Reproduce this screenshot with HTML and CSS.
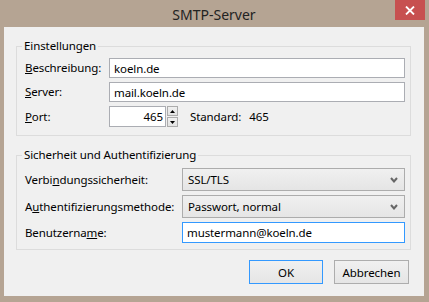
FILE: index.html
```html
<!DOCTYPE html>
<html lang="de">
<head>
    <meta charset="UTF-8">
    <title>SMTP-Server</title>
    <link rel="stylesheet" href="styles.css">
</head>
<body>
    <div class="window">
        <div class="titlebar">
            <span class="title">SMTP-Server</span>
            <button class="close" aria-label="Schließen">
                <svg width="10" height="9" viewBox="0 0 10 9"><path d="M1 0.5 L9 8.5 M9 0.5 L1 8.5" stroke="#fff" stroke-width="1.8"/></svg>
            </button>
        </div>
        <div class="client">
            <fieldset class="group">
                <legend>Einstellungen</legend>
                <div class="row">
                    <label class="lbl lbl-short"><u>B</u>eschreibung:</label>
                    <input class="field" value="koeln.de">
                </div>
                <div class="row">
                    <label class="lbl lbl-short"><u>S</u>erver:</label>
                    <input class="field" value="mail.koeln.de">
                </div>
                <div class="row port-row">
                    <label class="lbl lbl-short"><u>P</u>ort:</label>
                    <input class="field num" value="465">
                    <div class="spin">
                        <span class="spin-btn"><svg width="5" height="3" viewBox="0 0 5 3"><path d="M0 3 L2.5 0 L5 3 Z" fill="#000"/></svg></span>
                        <span class="spin-btn"><svg width="5" height="3" viewBox="0 0 5 3"><path d="M0 0 L2.5 3 L5 0 Z" fill="#000"/></svg></span>
                    </div>
                    <span class="std">Standard:</span>
                    <span class="std-val">465</span>
                </div>
            </fieldset>

            <fieldset class="group group-sec">
                <legend>Sicherheit und Authentifizierung</legend>
                <div class="row">
                    <label class="lbl lbl-long">Verbi<u>n</u>dungssicherheit:</label>
                    <div class="select">
                        <span>SSL/TLS</span>
                        <svg width="8" height="6" viewBox="0 0 8 6"><path d="M1 1 L4 4.5 L7 1" stroke="#666" stroke-width="2" fill="none"/></svg>
                    </div>
                </div>
                <div class="row">
                    <label class="lbl lbl-long">A<u>u</u>thentifizierungsmethode:</label>
                    <div class="select">
                        <span>Passwort, normal</span>
                        <svg width="8" height="6" viewBox="0 0 8 6"><path d="M1 1 L4 4.5 L7 1" stroke="#666" stroke-width="2" fill="none"/></svg>
                    </div>
                </div>
                <div class="row">
                    <label class="lbl lbl-long">Benutzerna<u>m</u>e:</label>
                    <input class="field focus" value="mustermann@koeln.de">
                </div>
            </fieldset>

            <div class="buttons">
                <button class="btn btn-default">OK</button>
                <button class="btn">Abbrechen</button>
            </div>
        </div>
    </div>
</body>
</html>
```

FILE: styles.css
```css
* {
    box-sizing: border-box;
}
body {
    margin: 0;
    font-family: 'Noto Sans', 'Open Sans', sans-serif;
    font-size: 11.5px;
    letter-spacing: -0.1px;
    color: #000;
    background: #b5a493;
}
.window {
    width: 429px;
    height: 302px;
    background: #b5a493;
    padding: 0 5px 6px 4px;
    display: flex;
    flex-direction: column;
}
.titlebar {
    position: relative;
    height: 27px;
    display: flex;
    justify-content: center;
    align-items: center;
}
.title {
    font-size: 14px;
    letter-spacing: 0;
    color: #222;
    padding-top: 1px;
}
.close {
    position: absolute;
    top: 0;
    right: -1px;
    width: 30px;
    height: 20px;
    border: none;
    padding: 0;
    background: #c75050;
    display: flex;
    align-items: center;
    justify-content: center;
}
.client {
    flex: 1;
    background: #f0f0f0;
    padding: 11px 13px 0 12px;
    display: flex;
    flex-direction: column;
}
.group {
    margin: 0;
    border: 1px solid #dcdcdc;
    padding: 4px 5px 8px 8px;
    display: flex;
    flex-direction: column;
    gap: 4px;
}
.group legend {
    line-height: 16px;
    padding: 0 2px;
    margin-left: -3px;
}
.group-sec {
    margin-top: 11px;
    padding-top: 5px;
    padding-bottom: 6px;
}
.row {
    display: flex;
    align-items: center;
}
.lbl {
    flex: none;
    line-height: 16px;
}
.lbl-short {
    width: 84px;
}
.lbl-long {
    width: 157px;
}
.field {
    flex: 1;
    height: 20px;
    border: 1px solid #abadb3;
    background: #fff;
    padding: 0 4px;
    font: inherit;
    letter-spacing: inherit;
    color: #000;
    outline: none;
}
.field.focus {
    height: 21px;
    border-color: #3399ff;
}
.port-row .num {
    flex: none;
    width: 57px;
    height: 21px;
    text-align: right;
    padding-right: 2px;
}
.spin {
    width: 11px;
    height: 21px;
    display: flex;
    flex-direction: column;
    gap: 1px;
    margin-left: 1px;
}
.spin-btn {
    flex: 1;
    border: 1px solid #acacac;
    background: linear-gradient(#f0f0f0, #e3e3e3);
    display: flex;
    align-items: center;
    justify-content: center;
}
.std {
    margin-left: 12px;
}
.std-val {
    margin-left: 8px;
}
.select {
    flex: 1;
    height: 23px;
    border: 1px solid #acacac;
    background: linear-gradient(#f0f0f0, #e5e5e5);
    padding: 0 6px 0 5px;
    display: flex;
    align-items: center;
    justify-content: space-between;
}
.buttons {
    display: flex;
    justify-content: flex-end;
    gap: 11px;
    margin-top: 10px;
    padding-right: 2px;
}
.btn {
    width: 75px;
    height: 24px;
    border: 1px solid #adadad;
    background: linear-gradient(#f0f0f0, #e5e5e5);
    font: inherit;
    letter-spacing: inherit;
    color: #000;
    padding: 0;
}
.btn-default {
    width: 74px;
    border-color: #3399ff;
}
```
